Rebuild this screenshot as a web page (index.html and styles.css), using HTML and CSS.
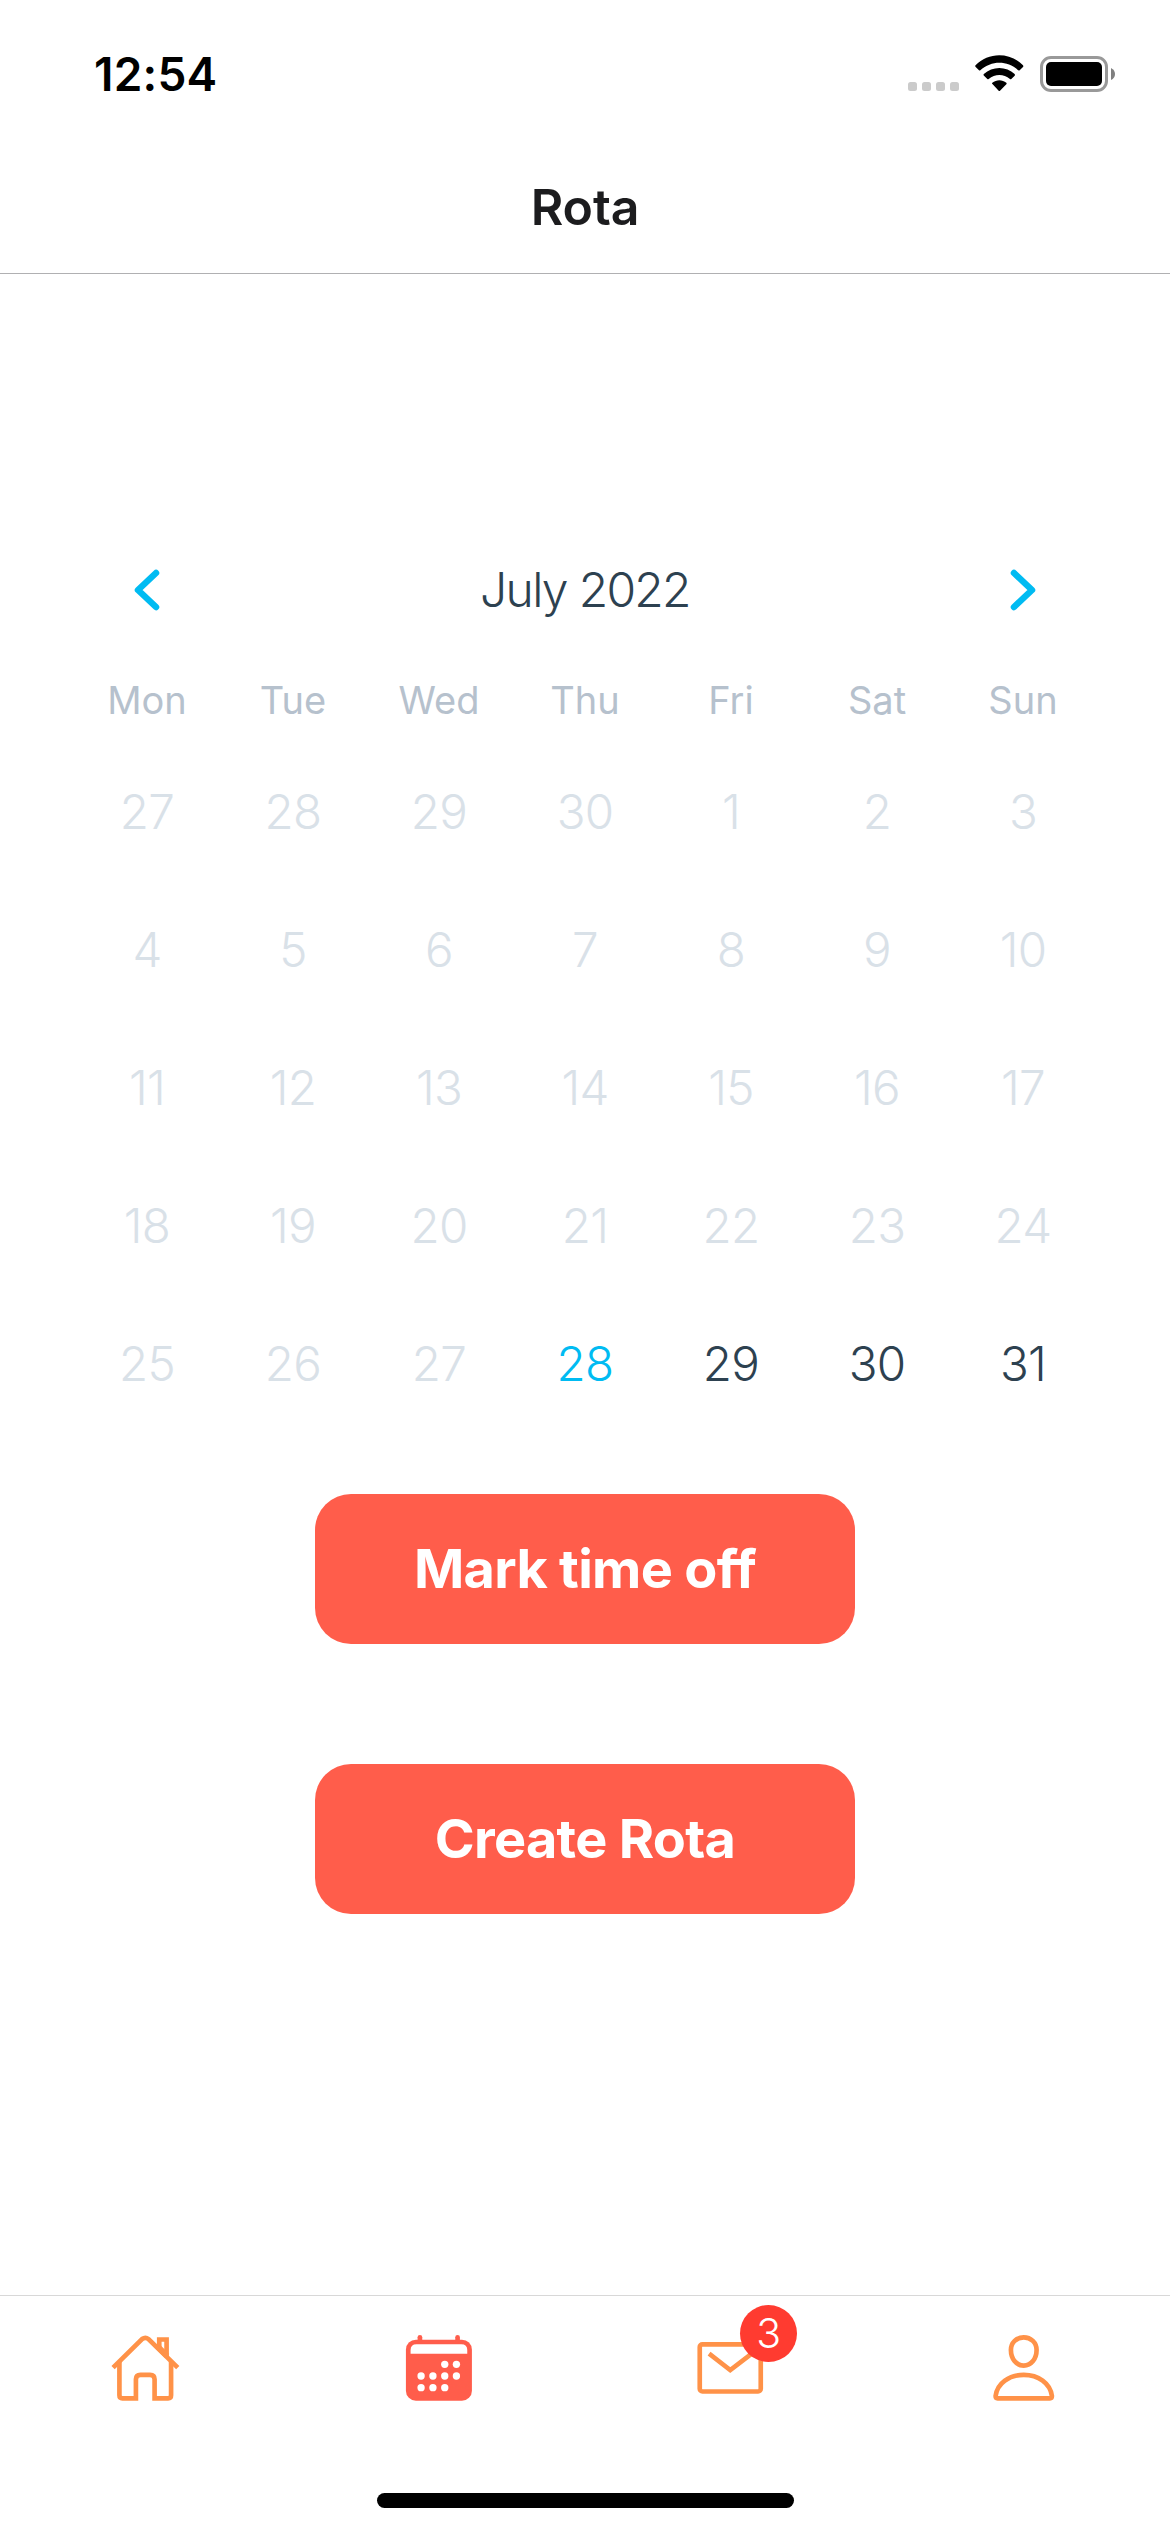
FILE: index.html
```html
<!DOCTYPE html>
<html lang="en">
<head>
<meta charset="utf-8">
<title>Rota</title>
<link rel="stylesheet" href="styles.css">
</head>
<body>
<div class="screen">
  <div class="status-bar">
    <span class="time">12:54</span>
    <div class="status-icons">
      <svg class="signal" width="51" height="9" viewBox="0 0 51 9" fill="#cbcbcb">
        <rect width="9" height="9" rx="2.5"/><rect x="14" width="9" height="9" rx="2.5"/><rect x="28" width="9" height="9" rx="2.5"/><rect x="42" width="9" height="9" rx="2.5"/>
      </svg>
      <svg class="wifi" width="49" height="36" viewBox="0 0 147 108">
        <path d="M1.500 31C0 33 .5 34 2 36L12 46Q14 47.500 16 46C49 16 97 16 130 46Q132 47.500 134 46L144 36Q146 34 144 31C105-9.500 40-9.500 1.500 31Z"/>
        <path d="M26.500 57C25 59 25 60 27 62L37 72Q39 74 41 72C60 56 86 56 105 72Q107 74 109 72L119 62Q121 60 119 57C94 33 52 33 26.500 57Z"/>
        <path d="M52 83C50 85 51 86 53 88L71 107Q73 108.500 75 107L94 88Q96 86 94 83C82 73 64 73 52 83Z"/>
      </svg>
      <svg class="battery" width="76" height="36" viewBox="0 0 76 36">
        <rect x="1.500" y="1.500" width="65" height="33" rx="9.500" fill="none" stroke="#999" stroke-width="3"/>
        <rect x="6" y="6" width="56" height="24" rx="5"/>
        <path d="M71 12Q75 14 75 18T71 24Z" fill="#808080"/>
      </svg>
    </div>
  </div>
  <header class="header"><h1 class="title">Rota</h1></header>
  <main class="content">
    <section class="calendar">
      <div class="month-row">
        <svg class="chevron" width="26" height="42" viewBox="0 0 26 42"><path d="M22 4L4 21L22 38"/></svg>
        <h2 class="month">July 2022</h2>
        <svg class="chevron" width="26" height="42" viewBox="0 0 26 42"><path d="M4 4L22 21L4 38"/></svg>
      </div>
      <div class="grid weekdays"><span>Mon</span><span>Tue</span><span>Wed</span><span>Thu</span><span>Fri</span><span>Sat</span><span>Sun</span></div>
      <div class="grid days">
        <span>27</span><span>28</span><span>29</span><span>30</span><span>1</span><span>2</span><span>3</span>
        <span>4</span><span>5</span><span>6</span><span>7</span><span>8</span><span>9</span><span>10</span>
        <span>11</span><span>12</span><span>13</span><span>14</span><span>15</span><span>16</span><span>17</span>
        <span>18</span><span>19</span><span>20</span><span>21</span><span>22</span><span>23</span><span>24</span>
        <span>25</span><span>26</span><span>27</span><span class="today">28</span><span class="open">29</span><span class="open">30</span><span class="open">31</span>
      </div>
    </section>
    <div class="actions">
      <button class="button" type="button">Mark time off</button>
      <button class="button" type="button">Create Rota</button>
    </div>
  </main>
  <nav class="tabs">
    <div class="tab">
      <svg class="icon" viewBox="0 0 216 216"><g transform="translate(-60.750 -156)" fill="none" stroke="#ff9248" stroke-width="14">
        <path d="M70 263L157 177Q167 170 176 177L264 263"/>
        <path d="M89 245V346Q89 355 98 355H138.500V298Q138.500 284.500 152 284.500H181Q194.500 284.500 194.500 298V355H235Q244 355 244 346V245"/>
        <path d="M208.500 206V178.500H230.500V228"/><path d="M204 200L232 228" stroke-width="18"/>
      </g></svg>
    </div>
    <div class="tab">
      <svg class="icon" viewBox="0 0 216 216"><g transform="translate(-68.250 -156)">
        <g fill="#ff5d4b"><rect x="77" y="179" width="198" height="183" rx="30"/><rect x="112" y="165" width="14" height="24" rx="7"/><rect x="225" y="165" width="14" height="24" rx="7"/></g>
        <g fill="#fff"><path d="M91 221V210Q91 193 109 193H243Q261 193 261 210V221Z"/>
        <circle cx="193.500" cy="253" r="11"/><circle cx="228.500" cy="253" r="11"/>
        <circle cx="122.500" cy="288" r="11"/><circle cx="158" cy="288" r="11"/><circle cx="193.500" cy="288" r="11"/><circle cx="228.500" cy="288" r="11"/>
        <circle cx="122.500" cy="323" r="11"/><circle cx="158" cy="323" r="11"/><circle cx="193.500" cy="323" r="11"/></g>
      </g></svg>
    </div>
    <div class="tab">
      <div class="icon-wrap">
        <svg class="icon" viewBox="0 0 216 216"><g transform="translate(-45.750 -156)" fill="none" stroke="#ff9248" stroke-width="14">
          <rect x="60" y="193" width="183" height="141.500" rx="8"/><path d="M88 221L151.500 270L216 221"/>
        </g></svg>
        <span class="badge">3</span>
      </div>
    </div>
    <div class="tab">
      <svg class="icon" viewBox="0 0 216 216"><g transform="translate(-83.250 -156)" fill="none" stroke="#ff9248" stroke-width="14">
        <path d="M190.500 172C169 172 152 188 152 210C152 236 168 257 190.500 257C213 257 229 236 229 210C229 188 212 172 190.500 172Z"/>
        <path d="M106 348C111 309 147 284.500 190.500 284.500S270 309 275 348Q275 355 269 355H112Q106 355 106 348Z"/>
      </g></svg>
    </div>
  </nav>
  <div class="home-area"><div class="home-indicator"></div></div>
</div>
</body>
</html>
```
FILE: styles.css
```css
* { box-sizing: border-box; }
body { margin: 0; background: #fff; font-family: Inter, "Liberation Sans", sans-serif; }
.screen { width: 1170px; height: 2532px; display: flex; flex-direction: column; background: #fff; }
.status-bar { height: 141px; flex: none; display: flex; justify-content: space-between; align-items: flex-start; padding: 46px 54px 0 94px; }
.time { font-size: 46px; line-height: 56px; font-weight: 600; letter-spacing: 0.2px; }
.status-icons { display: flex; align-items: flex-end; padding-top: 9px; }
.signal { margin: 0 16px 1px 0; }
.wifi { margin: 0 16px 1px 0; }
.header { height: 133px; flex: none; border-bottom: 1px solid #b0b0b2; display: flex; justify-content: center; align-items: center; }
.title { margin: 0; font-size: 50px; line-height: 60px; font-weight: 600; color: #1c1c1e; letter-spacing: -0.1px; }
.content { flex: 1; padding-top: 270px; }
.calendar { width: 1022px; margin: 0 auto; }
.month-row { height: 92px; padding: 0 60px; display: flex; justify-content: space-between; align-items: center; }
.chevron { fill: none; stroke: #00bbf2; stroke-width: 6.5; stroke-linecap: round; stroke-linejoin: round; }
.month { margin: 0; font-size: 48px; line-height: 58px; font-weight: 300; color: #2d4150; letter-spacing: -1.7px; }
.grid { display: grid; grid-template-columns: repeat(7, 1fr); justify-items: center; }
.weekdays { padding-top: 41px; font-size: 38px; line-height: 46px; color: #b6c1cd; }
.days { margin-top: 19px; margin-bottom: 1px; grid-auto-rows: 138px; align-items: center; font-size: 47.5px; font-weight: 300; color: #d9e1e8; letter-spacing: -0.7px; }
.days .today { color: #00bbf2; }
.days .open { color: #2d4150; }
.actions { display: flex; flex-direction: column; align-items: center; gap: 120px; padding-top: 61px; }
.button { width: 540px; height: 150px; padding: 0; border: 0; border-radius: 36px; background: #ff5d4b; color: #fff; font: 700 54px/66px Inter, "Liberation Sans", sans-serif; letter-spacing: -0.7px; }
.tabs { height: 135px; flex: none; border-top: 1px solid #d8d8d8; display: grid; grid-template-columns: repeat(4, 1fr); justify-items: center; align-items: start; padding-top: 36px; }
.icon { display: block; width: 72px; height: 72px; }
.icon-wrap { position: relative; }
.badge { position: absolute; left: 45px; top: -27px; width: 57px; height: 57px; border-radius: 50%; background: #ff3b30; color: #fff; font-size: 41px; line-height: 56px; font-weight: 350; text-align: center; }
.home-area { height: 102px; flex: none; display: flex; justify-content: center; align-items: flex-end; padding-bottom: 24px; }
.home-indicator { width: 417px; height: 15px; border-radius: 8px; background: #000; }
```
